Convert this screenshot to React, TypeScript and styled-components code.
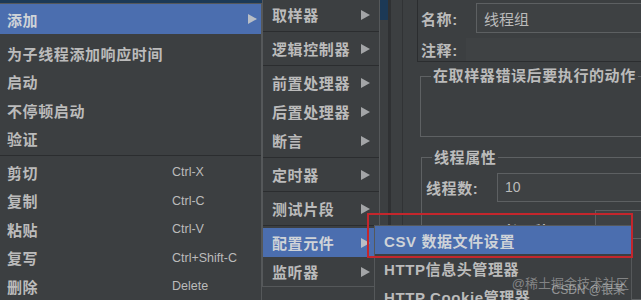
import React from "react";
import styled, { createGlobalStyle } from "styled-components";

const Global = createGlobalStyle`
  html, body { margin: 0; padding: 0; background: #3c3f41; }
  body { width: 641px; height: 300px; overflow: hidden; }
  * { box-sizing: border-box; }
`;

const FONT = `"Liberation Sans", "Noto Sans CJK SC", sans-serif`;

const Screen = styled.div`
  position: relative;
  width: 641px;
  height: 300px;
  overflow: hidden;
  background: #3c3f41;
  display: flex;
  font-family: ${FONT};
  color: #bbbbbb;
`;

const TreePane = styled.div`
  width: 388px;
  flex: none;
  display: flex;
  flex-direction: column;
`;

const TreeSelected = styled.div`
  height: 20px;
  background: #1c3956;
`;

const Splitter = styled.div`
  width: 3px;
  flex: none;
  background: #2f3133;
`;

const RightPane = styled.div`
  flex: 1;
  min-width: 0;
  padding-left: 11px;
  display: flex;
`;

const EditorArea = styled.div`
  flex: 1;
  min-width: 0;
  border-left: 1px solid #313335;
  padding-left: 14px;
  display: flex;
  flex-direction: column;
`;

const NamePanel = styled.div`
  height: 62px;
  border-left: 1px solid #2b2d2f;
  border-bottom: 1px solid #2b2d2f;
  padding-left: 3px;
  display: flex;
  flex-direction: column;
`;

const FieldRow = styled.div<{ $top: number; $h: number }>`
  display: flex;
  align-items: center;
  margin-top: ${(p) => p.$top}px;
  height: ${(p) => p.$h}px;
`;

const Label = styled.div<{ $w: number; $shift?: number }>`
  width: ${(p) => p.$w}px;
  flex: none;
  padding-top: ${(p) => p.$shift ?? 0}px;
  font-weight: bold;
  font-size: 15px;
  letter-spacing: 0.6px;
  white-space: nowrap;
  color: #bbbbbb;
`;

const TextBox = styled.div<{ $h: number }>`
  flex: 1;
  height: ${(p) => p.$h}px;
  margin-right: -20px;
  border: 1px solid #5d6062;
  background: #3e4143;
  padding-left: 7px;
  display: flex;
  align-items: center;
  font-size: 15px;
  color: #bbbbbb;
`;

const NumberText = styled.span`
  font-size: 14px;
`;

const CommentArea = styled.div`
  flex: 1;
  align-self: stretch;
  background: #3f4244;
  margin-right: -20px;
`;

const Group = styled.fieldset<{ $top: number; $left: number; $h: number }>`
  margin: ${(p) => p.$top}px -20px 0 ${(p) => p.$left}px;
  padding: 0 0 0 4px;
  height: ${(p) => p.$h}px;
  border: 1px solid #5e6163;
  min-width: 0;
`;

const GroupTitle = styled.legend`
  margin-left: 6px;
  padding: 0 2px;
  font-weight: bold;
  font-size: 15px;
  line-height: 18px;
  letter-spacing: 0.6px;
  color: #bbbbbb;
`;

/* ---------- popup menus ---------- */

const Menu = styled.div<{ $x: number; $y: number; $w: number }>`
  position: absolute;
  left: ${(p) => p.$x}px;
  top: ${(p) => p.$y}px;
  width: ${(p) => p.$w}px;
  background: #3c3f41;
  border: 1px solid #55585a;
  display: flex;
  flex-direction: column;
`;

const Item = styled.div<{ $h: number; $pad: number; $active?: boolean }>`
  height: ${(p) => p.$h}px;
  padding-left: ${(p) => p.$pad}px;
  display: flex;
  align-items: center;
  background: ${(p) => (p.$active ? "#4b6eaf" : "transparent")};
  color: ${(p) => (p.$active ? "#cfd3d8" : "#bbbbbb")};
  font-weight: bold;
  font-size: 15px;
  letter-spacing: 0.6px;
  white-space: nowrap;
`;

const ItemLabel = styled.span<{ $w?: number }>`
  ${(p) => (p.$w ? `width: ${p.$w}px; flex: none;` : "")}
`;

const Shortcut = styled.span`
  font-weight: normal;
  font-size: 12.5px;
  letter-spacing: 0;
  color: #bbbbbb;
`;

const Arrow = styled.span<{ $right: number; $active?: boolean }>`
  margin-left: auto;
  margin-right: ${(p) => p.$right}px;
  width: 0;
  height: 0;
  border-top: 5.5px solid transparent;
  border-bottom: 5.5px solid transparent;
  border-left: 9px solid ${(p) => (p.$active ? "#b9bec6" : "#a3a5a7")};
`;

const Separator = styled.div<{ $line?: boolean }>`
  height: 5px;
  display: flex;
  align-items: center;
  &::after {
    content: "";
    flex: 1;
    height: 1px;
    background: ${(p) => (p.$line ? "#2b2d2f" : "transparent")};
  }
`;

const Highlight = styled.div`
  position: absolute;
  left: 367px;
  top: 213px;
  width: 266px;
  height: 45px;
  border: 2px solid #c4262c;
`;

const Watermark = styled.div`
  position: absolute;
  right: 12px;
  bottom: 8px;
  font-family: ${FONT};
  font-size: 13px;
  color: rgba(220, 220, 220, 0.45);
  white-space: nowrap;
`;

const Watermark2 = styled.div`
  position: absolute;
  right: 16px;
  bottom: 3px;
  font-family: ${FONT};
  font-size: 12px;
  color: rgba(230, 230, 230, 0.5);
  white-space: nowrap;
`;

const menu1Top = [
  "为子线程添加响应时间",
  "启动",
  "不停顿启动",
  "验证",
];

const menu1Edit: [string, string][] = [
  ["剪切", "Ctrl-X"],
  ["复制", "Ctrl-C"],
  ["粘贴", "Ctrl-V"],
  ["复写", "Ctrl+Shift-C"],
  ["删除", "Delete"],
];

type M2 = { t: string; sep?: boolean; active?: boolean };
const menu2: M2[] = [
  { t: "取样器" },
  { t: "", sep: true },
  { t: "逻辑控制器" },
  { t: "", sep: true },
  { t: "前置处理器" },
  { t: "后置处理器" },
  { t: "断言" },
  { t: "", sep: true },
  { t: "定时器" },
  { t: "", sep: true },
  { t: "测试片段" },
  { t: "", sep: true },
  { t: "配置元件", active: true },
  { t: "监听器" },
];

const menu3 = ["CSV 数据文件设置", "HTTP信息头管理器", "HTTP Cookie管理器"];

export default function App() {
  return (
    <>
      <Global />
      <Screen>
        <TreePane>
          <TreeSelected />
        </TreePane>
        <Splitter />
        <RightPane>
          <EditorArea>
            <NamePanel>
              <FieldRow $top={3} $h={30}>
                <Label $w={55}>名称:</Label>
                <TextBox $h={30}>线程组</TextBox>
              </FieldRow>
              <FieldRow $top={5} $h={23}>
                <Label $w={45}>注释:</Label>
                <CommentArea />
              </FieldRow>
            </NamePanel>
            <Group $top={5} $left={3} $h={74}>
              <GroupTitle>在取样器错误后要执行的动作</GroupTitle>
            </Group>
            <Group $top={12} $left={4} $h={160}>
              <GroupTitle>线程属性</GroupTitle>
              <FieldRow $top={6} $h={29}>
                <Label $w={71}>线程数:</Label>
                <TextBox $h={29}>
                  <NumberText>10</NumberText>
                </TextBox>
              </FieldRow>
              <FieldRow $top={8} $h={29}>
                <Label $w={169} $shift={12}>Ramp-Up时间(秒):</Label>
                <TextBox $h={29} />
              </FieldRow>
            </Group>
          </EditorArea>
        </RightPane>

        <Menu $x={-1} $y={3} $w={263}>
          <Item $h={30} $pad={7} $active>
            <ItemLabel>添加</ItemLabel>
            <Arrow $right={4} $active />
          </Item>
          <Separator />
          {menu1Top.map((t) => (
            <Item key={t} $h={28.5} $pad={7}>
              <ItemLabel>{t}</ItemLabel>
            </Item>
          ))}
          <Separator $line />
          {menu1Edit.map(([t, s]) => (
            <Item key={t} $h={28.5} $pad={7}>
              <ItemLabel $w={165}>{t}</ItemLabel>
              <Shortcut>{s}</Shortcut>
            </Item>
          ))}
        </Menu>

        <Menu $x={262} $y={-1} $w={118}>
          {menu2.map((m, i) =>
            m.sep ? (
              <Separator key={i} $line />
            ) : (
              <Item key={i} $h={29} $pad={9} $active={m.active}>
                <ItemLabel>{m.t}</ItemLabel>
                <Arrow $right={9} $active={m.active} />
              </Item>
            )
          )}
        </Menu>

        <Menu $x={374} $y={225} $w={258}>
          {menu3.map((t, i) => (
            <Item key={t} $h={28} $pad={9} $active={i === 0}>
              <ItemLabel>{t}</ItemLabel>
            </Item>
          ))}
        </Menu>

        <Highlight />
        <Watermark>@稀土掘金技术社区</Watermark>
        <Watermark2>CSDN @银某</Watermark2>
      </Screen>
    </>
  );
}
